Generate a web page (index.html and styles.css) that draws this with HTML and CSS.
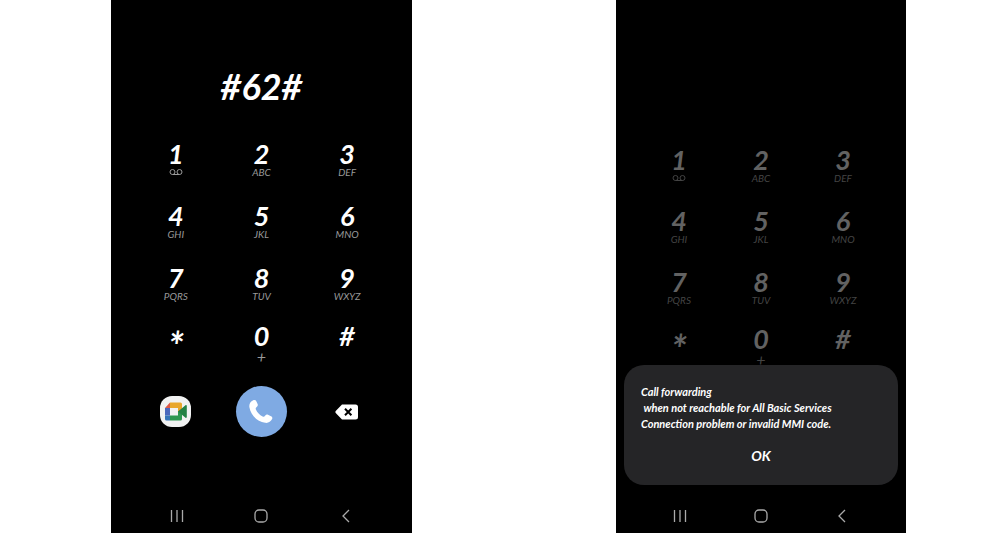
FILE: index.html
```html
<!DOCTYPE html>
<html lang="en">
<head>
  <meta charset="UTF-8" />
  <meta name="viewport" content="width=device-width, initial-scale=1.0" />
  <title>Call Forwarding Code</title>
  <link rel="stylesheet" href="styles.css">
</head>
<body>
  <div class="screens">
    <!-- Dialer -->
    <main class="phone">
      <input class="number" type="tel" aria-label="Number" value="#62#" />
      <div class="keypad">
        <button class="key">1<svg class="voicemail" viewBox="0 0 14 8"><circle cx="3.5" cy="4" r="2.5"/><circle cx="10.5" cy="4" r="2.5"/><path d="M3.5 6.5h7"/></svg></button>
        <button class="key">2<span>ABC</span></button>
        <button class="key">3<span>DEF</span></button>
        <button class="key">4<span>GHI</span></button>
        <button class="key">5<span>JKL</span></button>
        <button class="key">6<span>MNO</span></button>
        <button class="key">7<span>PQRS</span></button>
        <button class="key">8<span>TUV</span></button>
        <button class="key">9<span>WXYZ</span></button>
        <button class="key star">*</button>
        <button class="key">0<span class="plus">+</span></button>
        <button class="key">#</button>
      </div>
      <div class="actions">
        <button class="action" aria-label="Video call">
          <svg class="meet" viewBox="0 0 31 31">
            <rect width="31" height="31" rx="12" fill="#f1f2f2"/>
            <path fill="#df5946" d="M5 12l5-5.500v5.500z"/>
            <path fill="#e9a72b" d="M10 6.500h10.500a1.500 1.500 0 0 1 1.500 1.500v6l-4 3v-5h-8z"/>
            <path fill="#4a68bd" d="M5 12h5v7.500H5z"/>
            <path fill="#3474b8" d="M5 19.500h5v5H6.500A1.500 1.500 0 0 1 5 23z"/>
            <path fill="#2d9850" d="M10 19.500h8v-4l4-2v9.500a1.500 1.500 0 0 1-1.500 1.500H10z"/>
            <path fill="#238245" d="M18 15.500l7.500-6.200c.6-.5 1.300-.2 1.300.6v11.200c0 .8-.7 1.100-1.300.6z"/>
          </svg>
        </button>
        <button class="action call" aria-label="Call">
          <svg viewBox="0 0 26 26"><path fill="#fff" d="M5.200 1.200c1.400-.7 2.500-.1 3.100 1l1.300 2.900c.5 1.200.1 2-.7 2.700-1.200 1-1.500 1.500-1 2.600 1.300 3 3.700 5.600 6.700 7.100 1.200.6 1.700.2 2.700-1 .8-1 1.600-1.200 2.700-.7l3 1.500c1.200.6 1.700 1.600 1.100 2.800-1.300 2.700-4 4.200-7 3.700C8.900 22.500 2.700 15.900 1.400 8.200.9 5.100 2.400 2.500 5.200 1.200z"/></svg>
        </button>
        <button class="action" aria-label="Delete">
          <svg class="delete" viewBox="0 0 24 16"><path fill="#fff" d="M7 .5h13.500a2.500 2.500 0 0 1 2.500 2.500v10a2.500 2.500 0 0 1-2.500 2.500H7L1.200 9.500a2 2 0 0 1 0-3z"/><path stroke="#000" stroke-width="2" d="M10 4.800l6.400 6.400m0-6.400L10 11.200"/></svg>
        </button>
      </div>
      <nav class="navbar">
        <button aria-label="Recents"><svg viewBox="0 0 16 16"><path d="M2.500 2v12M8 2v12M13.500 2v12"/></svg></button>
        <button aria-label="Home"><svg viewBox="0 0 16 16"><rect x="2" y="2" width="12" height="12" rx="4"/></svg></button>
        <button aria-label="Back"><svg viewBox="0 0 16 16"><path d="M11 2L5 8l6 6"/></svg></button>
      </nav>
    </main>

    <!-- Result of the code -->
    <section class="phone result">
      <div class="keypad">
        <button class="key" disabled>1<svg class="voicemail" viewBox="0 0 14 8"><circle cx="3.5" cy="4" r="2.5"/><circle cx="10.5" cy="4" r="2.5"/><path d="M3.5 6.5h7"/></svg></button>
        <button class="key" disabled>2<span>ABC</span></button>
        <button class="key" disabled>3<span>DEF</span></button>
        <button class="key" disabled>4<span>GHI</span></button>
        <button class="key" disabled>5<span>JKL</span></button>
        <button class="key" disabled>6<span>MNO</span></button>
        <button class="key" disabled>7<span>PQRS</span></button>
        <button class="key" disabled>8<span>TUV</span></button>
        <button class="key" disabled>9<span>WXYZ</span></button>
        <button class="key star" disabled>*</button>
        <button class="key" disabled>0<span class="plus">+</span></button>
        <button class="key" disabled>#</button>
      </div>
      <div class="dialog" role="dialog" aria-label="Call forwarding">
        <p class="message">Call forwarding
 when not reachable for All Basic Services
Connection problem or invalid MMI code.</p>
        <button class="ok">OK</button>
      </div>
      <nav class="navbar">
        <button aria-label="Recents"><svg viewBox="0 0 16 16"><path d="M2.500 2v12M8 2v12M13.500 2v12"/></svg></button>
        <button aria-label="Home"><svg viewBox="0 0 16 16"><rect x="2" y="2" width="12" height="12" rx="4"/></svg></button>
        <button aria-label="Back"><svg viewBox="0 0 16 16"><path d="M11 2L5 8l6 6"/></svg></button>
      </nav>
    </section>
  </div>
</body>
</html>
```
FILE: styles.css
```css
* {
  box-sizing: border-box;
}
body {
  margin: 0;
  background: #fff;
  font-family: Lato, sans-serif;
  font-style: italic;
}
button, input {
  font: inherit;
  color: inherit;
  background: none;
  border: none;
  padding: 0;
}
button {
  cursor: pointer;
}
svg {
  display: block;
  fill: none;
}
.screens {
  display: grid;
  grid-template-columns: 301fr 290fr;
  column-gap: 20.4vw;
  padding: 0 9.4vw 0 11.1vw;
  min-height: 100vh;
}
.phone {
  display: flex;
  flex-direction: column;
  position: relative;
  min-width: 0;
  padding-top: 65px;
  background: #000;
  color: #fff;
}
.number {
  width: 100%;
  height: 42px;
  margin-bottom: 35px;
  text-align: center;
  font-size: 36px;
  font-weight: 700;
}
.keypad {
  display: grid;
  grid-template-columns: repeat(3, 1fr);
  grid-template-rows: 62px 62px 58px 62px;
  align-items: start;
  padding: 0 22px;
}
.key {
  display: flex;
  flex-direction: column;
  align-items: center;
  font-size: 27px;
  font-weight: 700;
  line-height: 24px;
}
.key span {
  color: #999;
  font-size: 10px;
  font-weight: 400;
  line-height: 12px;
}
.key .plus {
  font-size: 16px;
  line-height: 18px;
}
.star {
  font-size: 40px;
  line-height: 44px;
}
.voicemail {
  width: 14px;
  height: 8px;
  margin-top: 2px;
  stroke: #999;
}
.actions {
  display: grid;
  grid-template-columns: repeat(3, 1fr);
  align-items: center;
  justify-items: center;
  padding: 0 22px;
}
.meet {
  width: 31px;
  height: 31px;
}
.call {
  display: grid;
  place-items: center;
  width: 51px;
  height: 51px;
  border-radius: 50%;
  background: #7faae3;
}
.call svg {
  width: 26px;
  height: 26px;
}
.delete {
  width: 24px;
  height: 16px;
}
.navbar {
  display: grid;
  grid-template-columns: repeat(3, 1fr);
  justify-items: center;
  margin-top: auto;
  padding: 0 24px 9px;
}
.navbar svg {
  width: 16px;
  height: 16px;
  stroke: #aaa;
  stroke-width: 1.3;
}
.result {
  padding-top: 148px;
}
.result .keypad {
  grid-template-rows: 61px 61px 57px 62px;
  color: #626262;
}
.result .key {
  cursor: default;
}
.result .key span {
  color: #444;
}
.result .voicemail {
  stroke: #444;
}
/* sits over the dimmed keypad */
.dialog {
  position: absolute;
  right: 8px;
  bottom: 48px;
  left: 8px;
  display: flex;
  flex-direction: column;
  align-items: center;
  padding: 19px 17px 20px;
  border-radius: 20px;
  background: #252527;
}
.message {
  align-self: stretch;
  margin: 0 0 15px;
  font-size: 11px;
  font-weight: 700;
  line-height: 16px;
  white-space: pre-wrap;
}
.ok {
  font-size: 14px;
  font-weight: 700;
  line-height: 18px;
}
```
